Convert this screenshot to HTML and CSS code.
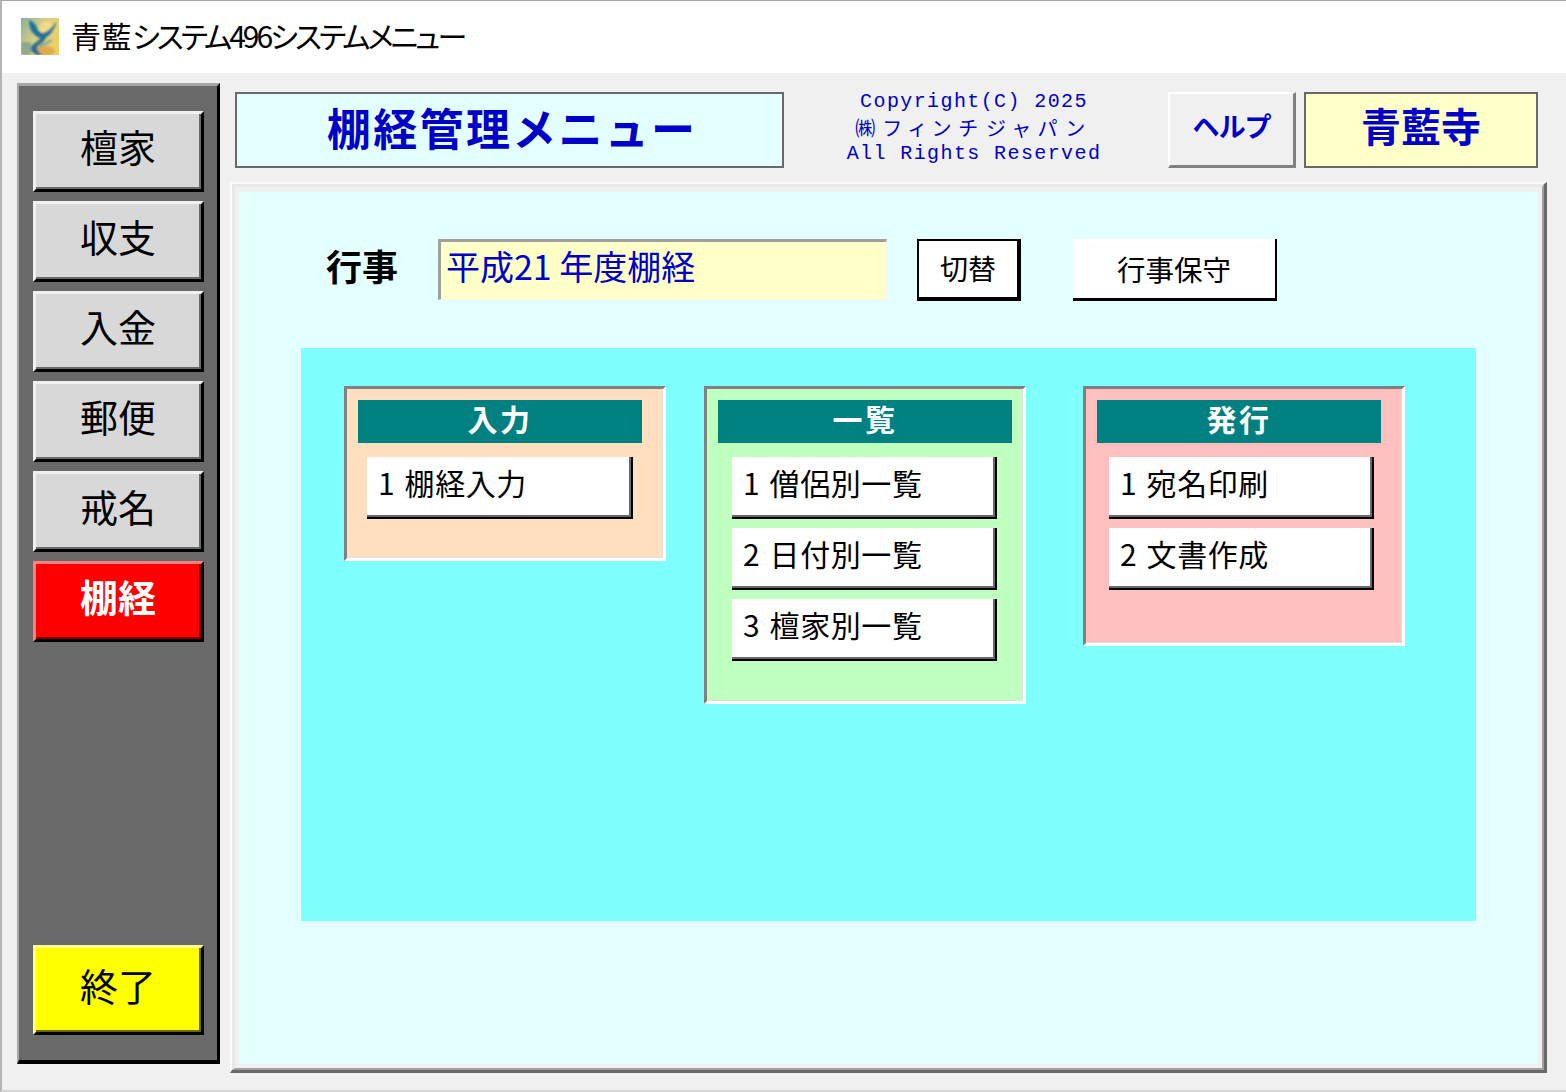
FILE: index.html
```html
<!DOCTYPE html>
<html lang="ja">
<head>
<meta charset="utf-8">
<title>青藍システム496システムメニュー</title>
<link rel="stylesheet" href="styles.css">
</head>
<body>
<div class="window">
  <header class="titlebar">
    <svg class="logo" viewBox="0 0 38 37" aria-hidden="true">
      <defs>
        <linearGradient id="lg" x1="0" y1="0" x2="1" y2="0.6">
          <stop offset="0" stop-color="#86b09c"/>
          <stop offset="0.5" stop-color="#d8cf84"/>
          <stop offset="1" stop-color="#ecd066"/>
        </linearGradient>
        <filter id="soft"><feGaussianBlur stdDeviation="0.8"/></filter>
      </defs>
      <rect width="38" height="37" fill="url(#lg)"/>
      <g filter="url(#soft)">
        <rect x="0" y="24" width="10" height="13" fill="#8fa98a"/>
        <ellipse cx="23" cy="33" rx="11" ry="5" fill="#e0a94e"/>
        <ellipse cx="26" cy="10" rx="7" ry="6" fill="#f0dc88"/>
        <path d="M8 2C12 4 15 6 16 10C17 14 20 15 22 15C27 14 31 9 35 4C34 11 29 18 23 20C20 21 15 19 12 15C9 12 8 7 8 2Z" fill="#1c6f9e"/>
        <path d="M21 18C19 23 12 25 10 29C9 33 12 35 16 37L21 37C17 33 15 31 17 28C20 25 24 24 25 19Z" fill="#2a6e98"/>
        <path d="M18 27C22 26 27 24 30 21L31 23C27 26 23 28 19 29Z" fill="#6fa3a3"/>
      </g>
    </svg>
    <span class="app-title"><span class="title-kanji">青藍</span>システム496システムメニュー</span>
  </header>
  <div class="workspace">
    <nav class="sidebar">
      <button class="side-btn">檀家</button>
      <button class="side-btn">収支</button>
      <button class="side-btn">入金</button>
      <button class="side-btn">郵便</button>
      <button class="side-btn">戒名</button>
      <button class="side-btn side-active">棚経</button>
      <button class="side-btn side-exit">終了</button>
    </nav>
    <div class="content">
      <div class="head">
        <div class="page-title">棚経管理メニュー</div>
        <div class="copyright">
          <div>Copyright(C) 2025</div>
          <div class="copy-ja">㈱フィンチジャパン</div>
          <div>All Rights Reserved</div>
        </div>
        <button class="help-btn">ヘルプ</button>
        <div class="temple">青藍寺</div>
      </div>
      <main class="panel">
        <div class="panel-bevel">
          <div class="panel-fill">
            <div class="event-row">
              <span class="event-label">行事</span>
              <div class="event-input">平成21 年度棚経</div>
              <button class="switch-btn">切替</button>
              <button class="maint-btn">行事保守</button>
            </div>
            <div class="menu-area">
              <section class="group group-input">
                <h2 class="group-head">入力</h2>
                <button class="menu-btn">1 棚経入力</button>
              </section>
              <section class="group group-list">
                <h2 class="group-head">一覧</h2>
                <button class="menu-btn">1 僧侶別一覧</button>
                <button class="menu-btn">2 日付別一覧</button>
                <button class="menu-btn">3 檀家別一覧</button>
              </section>
              <section class="group group-issue">
                <h2 class="group-head">発行</h2>
                <button class="menu-btn">1 宛名印刷</button>
                <button class="menu-btn">2 文書作成</button>
              </section>
            </div>
          </div>
        </div>
      </main>
    </div>
  </div>
</div>
</body>
</html>
```
FILE: styles.css
```css
* { box-sizing: border-box; }
html, body { margin: 0; padding: 0; }
body {
  width: 1566px;
  height: 1092px;
  overflow: hidden;
  background: #f0f0f0;
  font-family: "Noto Sans CJK JP", "Liberation Sans", sans-serif;
  color: #000;
}
button {
  font-family: inherit;
  padding: 0;
  margin: 0;
  border-radius: 0;
  cursor: default;
}
.window {
  width: 1566px;
  height: 1092px;
  display: flex;
  flex-direction: column;
  background: #f0f0f0;
  border-top: 1px solid #a8a8a8;
  border-left: 2px solid #b4b4b4;
  border-bottom: 2px solid #d8d8d8;
}
.titlebar {
  height: 72px;
  flex: none;
  background: #fff;
  display: flex;
  align-items: center;
  padding-left: 19px;
  padding-bottom: 1px;
}
.logo { width: 38px; height: 37px; flex: none; margin-top: -1px; }
.app-title {
  margin-left: 12px;
  margin-top: -4px;
  font-size: 30px;
  line-height: 36px;
  font-feature-settings: "palt";
  letter-spacing: -3px;
  white-space: nowrap;
}
.title-kanji { letter-spacing: 0.5px; }
.workspace {
  flex: 1;
  display: flex;
  align-items: flex-start;
  padding: 10px 0 0 15px;
}
.sidebar {
  width: 203px;
  height: 981px;
  flex: none;
  display: flex;
  flex-direction: column;
  gap: 9px;
  background: #696969;
  border-style: solid;
  border-width: 3px 3px 4px 2px;
  border-color: #a8a8a8 #000 #000 #a8a8a8;
  padding: 25px 0 25px 14px;
}
.side-btn {
  width: 171px;
  height: 81px;
  flex: none;
  background: #d8d8d8;
  border-style: solid;
  border-width: 3px;
  border-color: #f0f0f0 #000 #000 #f0f0f0;
  box-shadow: inset -2px -2px 0 #696969;
  font-size: 38px;
  line-height: 1;
  color: #000;
  padding-bottom: 11px;
  padding-right: 1px;
}
.side-active {
  background: #ff0000;
  color: #fff;
  font-weight: 700;
  border-color: #ff8080 #000 #000 #ff8080;
  box-shadow: inset -2px -2px 0 #800000;
}
.side-exit {
  height: 90px;
  margin-top: auto;
  background: #ffff00;
  border-color: #ffff90 #000 #000 #ffff90;
  box-shadow: inset -2px -2px 0 #696900;
}
.content {
  width: 1317px;
  margin-left: 10px;
  flex: none;
  padding-top: 9px;
}
.head {
  display: flex;
  height: 76px;
  margin-left: 5px;
  width: 1303px;
}
.page-title {
  width: 549px;
  flex: none;
  background: #e4ffff;
  border: 2px solid #696969;
  color: #0000c8;
  font-size: 44px;
  font-weight: 700;
  line-height: 66px;
  padding-left: 90px;
  letter-spacing: 2.3px;
  white-space: nowrap;
}
.copyright {
  flex: 1;
  text-align: center;
  color: #0000c8;
  font-family: "Liberation Mono", monospace;
  font-size: 20px;
  line-height: 26px;
  letter-spacing: 1.4px;
  margin-top: -3px;
  padding-right: 4px;
  white-space: nowrap;
}
.copy-ja {
  font-family: "Noto Sans CJK JP", sans-serif;
  font-size: 20px;
  height: 26px;
  line-height: 26px;
  letter-spacing: 8.6px;
  font-feature-settings: "palt";
}
.help-btn {
  width: 128px;
  height: 76px;
  flex: none;
  background: #f0f0f0;
  border-style: solid;
  border-width: 2px 3px 3px 2px;
  border-color: #fff #808080 #808080 #fff;
  color: #0000c8;
  font-size: 27px;
  font-weight: 700;
  font-feature-settings: "palt";
  padding-bottom: 8px;
}
.temple {
  width: 234px;
  flex: none;
  margin-left: 8px;
  background: #ffffc8;
  border: 2px solid #696969;
  color: #0000c8;
  font-size: 40px;
  font-weight: 700;
  line-height: 62px;
  text-align: center;
}
.panel {
  margin-top: 14px;
  width: 1317px;
  height: 891px;
  border-style: solid;
  border-width: 2px 3px 3px 2px;
  border-color: #fafafa #696969 #696969 #fafafa;
}
.panel-bevel {
  height: 100%;
  border-style: solid;
  border-width: 3px 2px 2px 3px;
  border-color: #e8e8e8 #a0a0a0 #a0a0a0 #e8e8e8;
  padding: 5px 4px 4px 4px;
  background: #f0f0f0;
}
.panel-fill {
  height: 100%;
  background: #e4ffff;
  padding-top: 47px;
}
.event-row {
  display: flex;
  align-items: flex-start;
  padding-left: 87px;
  height: 62px;
}
.event-label {
  width: 112px;
  flex: none;
  font-size: 36px;
  font-weight: 700;
  line-height: 52px;
}
.event-input {
  width: 449px;
  height: 61px;
  flex: none;
  background: #ffffc8;
  border-style: solid;
  border-width: 3px 1px 1px 3px;
  border-color: #a0a0a0 #f4f4f4 #f4f4f4 #a0a0a0;
  color: #0000c8;
  font-size: 34px;
  line-height: 48px;
  padding-left: 5px;
  white-space: nowrap;
}
.switch-btn {
  width: 104px;
  height: 62px;
  flex: none;
  margin-left: 30px;
  background: #fff;
  border-style: solid;
  border-width: 2px 4px 4px 2px;
  border-color: #000;
  font-size: 28px;
  color: #000;
  padding-bottom: 2px;
}
.maint-btn {
  width: 204px;
  height: 62px;
  flex: none;
  margin-left: 52px;
  background: #fff;
  border: 0 solid #000;
  border-width: 0 2px 3px 0;
  font-size: 28.5px;
  color: #000;
  padding-bottom: 1px;
}
.menu-area {
  width: 1175px;
  height: 573px;
  margin: 47px 0 0 62px;
  padding: 38px 0 0 43px;
  background: #80ffff;
  display: flex;
  align-items: flex-start;
}
.group {
  width: 322px;
  flex: none;
  display: flex;
  flex-direction: column;
  align-items: flex-start;
  gap: 9px;
  border-style: solid;
  border-width: 3px;
  border-color: #808080 #fff #fff #808080;
  box-shadow: inset -1px -1px 0 #e0e0e0;
  padding: 11px 0 0 11px;
}
.group-input { height: 175px; background: #ffdfbf; }
.group-list { height: 318px; background: #bfffbf; margin-left: 38px; }
.group-issue { height: 260px; background: #ffbfbf; margin-left: 57px; }
.group-head {
  margin: 0 0 5px;
  width: 284px;
  height: 43px;
  flex: none;
  background: #008080;
  color: #fff;
  font-size: 30px;
  font-weight: 700;
  line-height: 36px;
  text-align: center;
  letter-spacing: 2.5px;
}
.group-list .group-head { width: 294px; }
.menu-btn {
  width: 265px;
  height: 62px;
  flex: none;
  background: #fff;
  border: 0 solid #000;
  border-width: 0 2px 2px 0;
  box-shadow: inset -2px -2px 0 #696969;
  font-size: 30px;
  line-height: 1;
  text-align: left;
  padding-left: 11px;
  padding-bottom: 10px;
  letter-spacing: 0.6px;
  word-spacing: 2px;
  color: #000;
  white-space: nowrap;
}
.group-input .menu-btn { margin-left: 9px; width: 266px; }
.group-list .menu-btn { margin-left: 14px; }
.group-issue .menu-btn { margin-left: 12px; }
```
